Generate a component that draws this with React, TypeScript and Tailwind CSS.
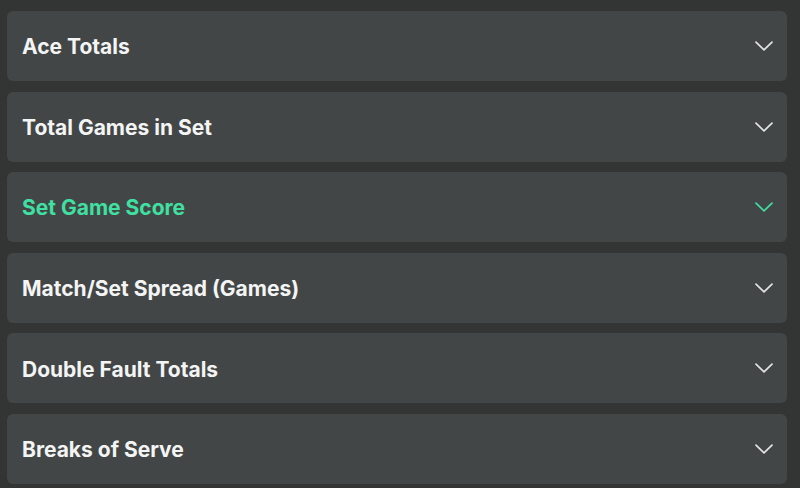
const markets = [
  { name: 'Ace Totals' },
  { name: 'Total Games in Set' },
  { name: 'Set Game Score', active: true },
  { name: 'Match/Set Spread (Games)' },
  { name: 'Double Fault Totals' },
  { name: 'Breaks of Serve' },
]

const Chevron = ({ active }: { active?: boolean }) => (
  <svg width="18" height="10" viewBox="0 0 18 10" fill="none" className={active ? 'text-[#3fe0a2]' : 'text-[#e4e5e5]'}>
    <path d="M1 1.2 L9 8.8 L17 1.2" stroke="currentColor" strokeWidth="1.7" strokeLinecap="round" strokeLinejoin="round" />
  </svg>
)

export default function App() {
  return (
    <div className="w-[800px] h-[488px] bg-[#333434] overflow-hidden font-['Inter',sans-serif]">
      <div className="flex flex-col gap-[10.6px] pl-[7px] pr-[13px] pt-[11px]">
        {markets.map((m) => (
          <div
            key={m.name}
            className="h-[70px] shrink-0 rounded-md bg-[#434646] flex items-center justify-between pl-[15px] pr-[14px]"
          >
            <span
              className={`text-[21px] font-bold pt-[2px] ${m.active ? 'text-[#3fe0a2]' : 'text-[#f3f4f4]'}`}
            >
              {m.name}
            </span>
            <Chevron active={m.active} />
          </div>
        ))}
      </div>
    </div>
  )
}
